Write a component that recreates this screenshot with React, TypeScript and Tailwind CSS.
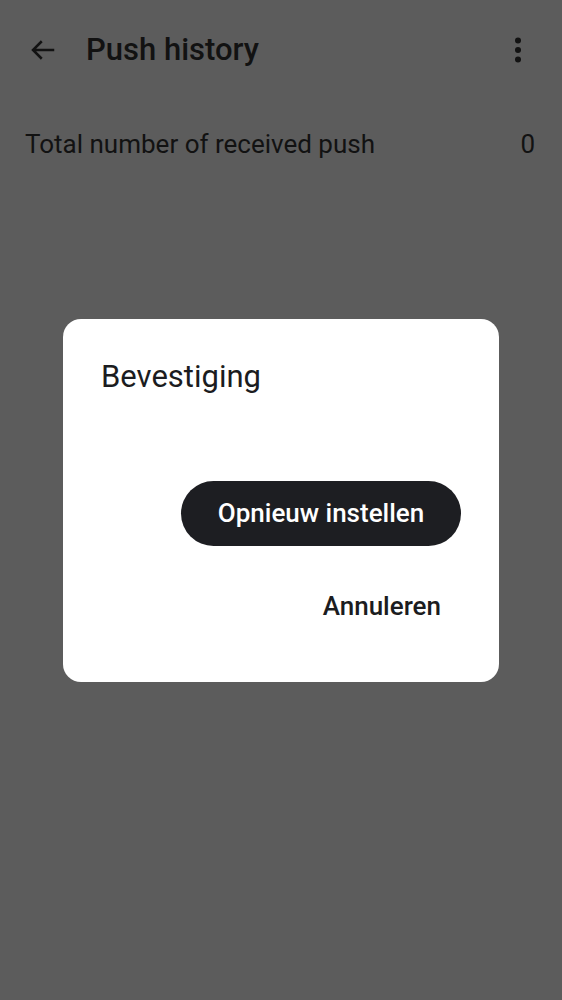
import React from "react";

export default function App() {
  return (
    <div
      className="relative h-screen w-full overflow-hidden bg-[#5c5c5c] text-[#121212]"
      style={{ fontFamily: "Roboto, 'Noto Sans', sans-serif" }}
    >
      {/* top bar */}
      <header className="flex h-[100px] items-center pl-[28px] pr-[40px]">
        <svg width="30" height="30" viewBox="0 0 24 24" fill="none" stroke="currentColor" strokeWidth="2">
          <path d="M21 12H4M11 5l-7 7 7 7" />
        </svg>
        <h1 className="ml-[28px] flex-1 text-[31px] font-medium">Push history</h1>
        <svg width="8" height="26" viewBox="0 0 8 26" fill="currentColor">
          <circle cx="4" cy="3.5" r="3" />
          <circle cx="4" cy="13" r="3" />
          <circle cx="4" cy="22.5" r="3" />
        </svg>
      </header>

      <div className="mt-[25px] flex items-center justify-between pl-[25px] pr-[27px] text-[26px]">
        <span>Total number of received push</span>
        <span>0</span>
      </div>

      {/* confirm dialog */}
      <div className="absolute inset-0 flex items-center justify-center">
        <div className="flex w-[436px] flex-col rounded-[18px] bg-white px-[38px] pb-[51px] pt-[39px] text-[#1b1c20]">
          <h2 className="text-[31px] leading-[38px]">Bevestiging</h2>
          <div className="mt-[85px] flex flex-col items-end">
            <button className="h-[65px] w-[280px] rounded-full bg-[#1d1e22] text-[26px] font-medium text-white">
              Opnieuw instellen
            </button>
            <button className="mt-[37px] mr-[20px] h-[48px] text-[26px] font-medium">Annuleren</button>
          </div>
        </div>
      </div>
    </div>
  );
}
